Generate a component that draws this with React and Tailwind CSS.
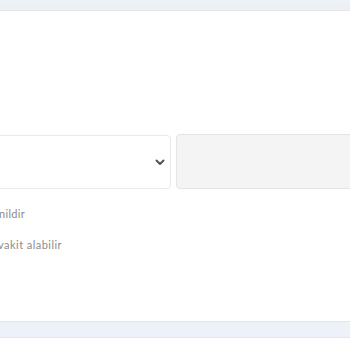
export default function App() {
  return (
    <div className="w-[350px] h-[350px] overflow-hidden bg-white flex flex-col" style={{ fontFamily: "Lato, 'Noto Sans', sans-serif" }}>
      <div className="h-[11px] shrink-0 bg-gradient-to-b from-[#eef1f5] to-[#ebeff4] border-b border-[#e3e7eb]" />
      <div className="h-[124px] shrink-0" />
      <div className="flex gap-[5px] -ml-[100px] shrink-0">
        <div className="w-[271px] h-[54px] shrink-0 rounded-[4px] border border-[#e9e9e9] bg-white flex items-center justify-end pr-[5px]">
          <svg width="10" height="7" viewBox="0 0 10 7">
            <path d="M1.5 1.5 L5 5 L8.5 1.5" fill="none" stroke="#555" strokeWidth="2" strokeLinecap="round" strokeLinejoin="round" />
          </svg>
        </div>
        <div className="w-[300px] h-[55px] -mt-[1px] shrink-0 rounded-[4px] border border-[#e4e4e4] bg-[#f4f4f4]" />
      </div>
      <div className="h-[18px] shrink-0" />
      <div className="w-[25px] flex justify-end whitespace-nowrap text-[11px] leading-[14px] tracking-[0.3px] text-[#8c8c8c] shrink-0">
        <span>Bu alan değiştirilemez, gizlenildir</span>
      </div>
      <div className="h-[17px] shrink-0" />
      <div className="w-[62px] flex justify-end whitespace-nowrap text-[11px] leading-[14px] tracking-[0.45px] text-[#8c8c8c] shrink-0">
        <span>İşlemin tamamlanması biraz vakit alabilir</span>
      </div>
      <div className="h-[69px] shrink-0" />
      <div className="h-[17px] shrink-0 bg-[#edf2f9] border-y border-[#e2e7e8]" />
    </div>
  );
}
